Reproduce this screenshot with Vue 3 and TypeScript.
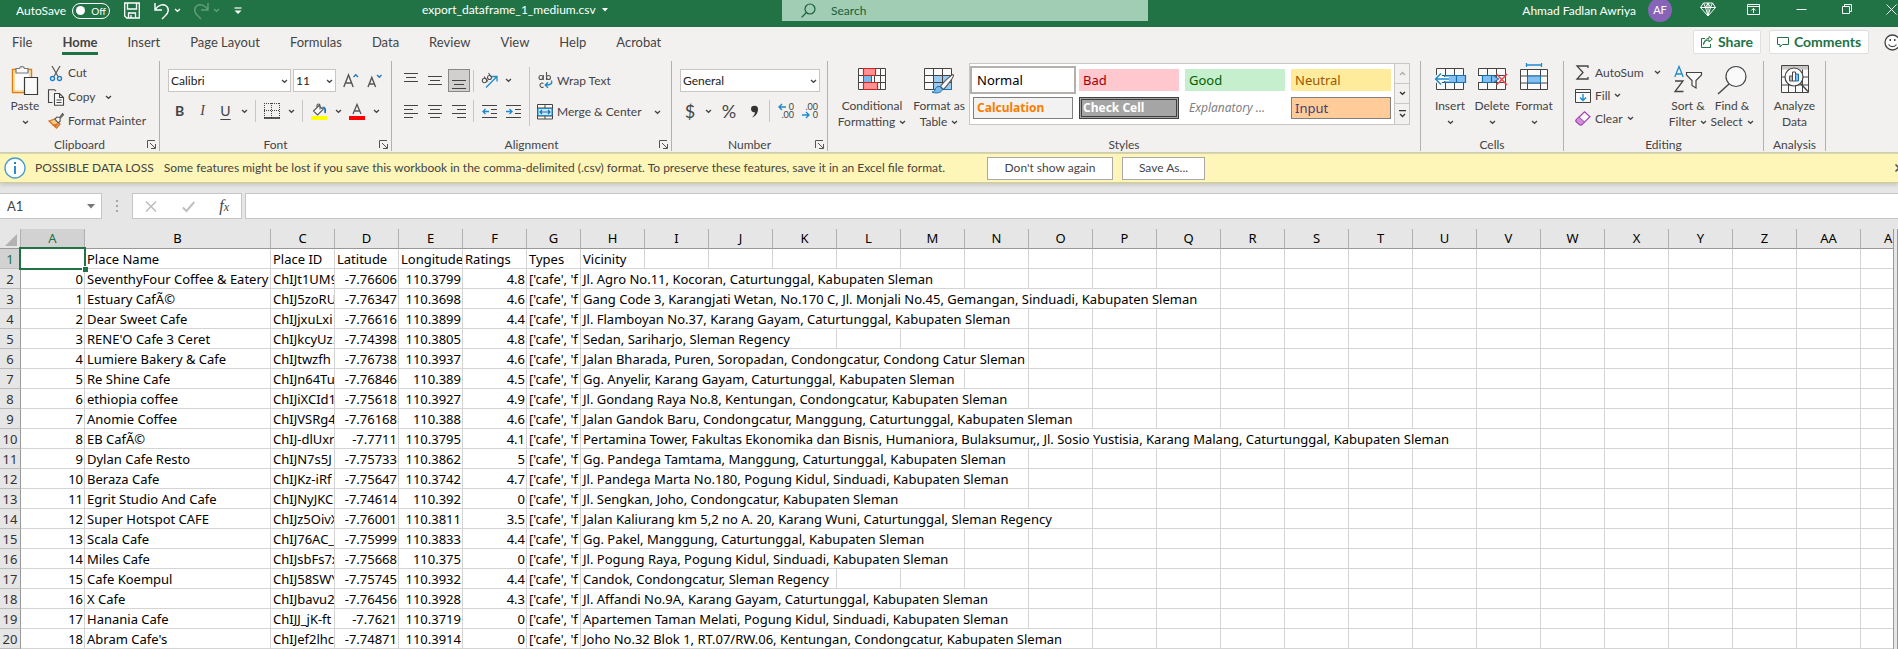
<script setup lang="ts">
import { h, ref } from 'vue'

const Chevron = () =>
  h('svg', { class: 'chev', width: 7, height: 5, viewBox: '0 0 7 5', 'aria-hidden': 'true' }, [
    h('path', { d: 'M1 1l2.5 2.3L6 1', fill: 'none', stroke: 'currentColor', 'stroke-width': 1.3 }),
  ])
const Launcher = () =>
  h('svg', { width: 9, height: 9, viewBox: '0 0 9 9', 'aria-hidden': 'true' }, [
    h('path', { d: 'M.5 8V.5H8M3 3l5 5M8.5 4v4.5H4', fill: 'none', stroke: '#555' }),
  ])

const tabs = ['File', 'Home', 'Insert', 'Page Layout', 'Formulas', 'Data', 'Review', 'View', 'Help', 'Acrobat']
const fontName = ref('Calibri')
const fontSize = ref('11')
const numberFormat = ref('General')
const nameBox = ref('A1')
const formula = ref('')

const cellStyles = [
  { name: 'Normal', cls: 'normal' },
  { name: 'Bad', cls: 'bad' },
  { name: 'Good', cls: 'good' },
  { name: 'Neutral', cls: 'neutral' },
  { name: 'Calculation', cls: 'calculation' },
  { name: 'Check Cell', cls: 'check' },
  { name: 'Explanatory ...', cls: 'explanatory' },
  { name: 'Input', cls: 'entry' },
]

const letters = [...'ABCDEFGHIJKLMNOPQRSTUVWXYZ', 'AA', 'AB']
const FIRST_FREE = 8

interface Row {
  name: string
  id: string
  lat: string
  lng: string
  rating: string
  vicinity: string
  span: number
}
const r = (name: string, id: string, lat: string, lng: string, rating: string, vicinity: string, span: number): Row =>
  ({ name, id, lat, lng, rating, vicinity, span })

const rows: Row[] = [
  r('SeventhyFour Coffee & Eatery', 'ChIJt1UM9', '-7.76606', '110.3799', '4.8', 'Jl. Agro No.11, Kocoran, Caturtunggal, Kabupaten Sleman', 6),
  r('Estuary CafÃ©', 'ChIJ5zoRU', '-7.76347', '110.3698', '4.6', 'Gang Code 3, Karangjati Wetan, No.170 C, Jl. Monjali No.45, Gemangan, Sinduadi, Kabupaten Sleman', 10),
  r('Dear Sweet Cafe', 'ChIJjxuLxi', '-7.76616', '110.3899', '4.4', 'Jl. Flamboyan No.37, Karang Gayam, Caturtunggal, Kabupaten Sleman', 7),
  r("RENE'O Cafe 3 Ceret", 'ChIJkcyUz.', '-7.74398', '110.3805', '4.8', 'Sedan, Sariharjo, Sleman Regency', 4),
  r('Lumiere Bakery & Cafe', 'ChIJtwzfh', '-7.76738', '110.3937', '4.6', 'Jalan Bharada, Puren, Soropadan, Condongcatur, Condong Catur Sleman', 7),
  r('Re Shine Cafe', 'ChIJn64Tu', '-7.76846', '110.389', '4.5', 'Gg. Anyelir, Karang Gayam, Caturtunggal, Kabupaten Sleman', 6),
  r('ethiopia coffee', 'ChIJiXCId1', '-7.75618', '110.3927', '4.9', 'Jl. Gondang Raya No.8, Kentungan, Condongcatur, Kabupaten Sleman', 7),
  r('Anomie Coffee', 'ChIJVSRg4', '-7.76168', '110.388', '4.6', 'Jalan Gandok Baru, Condongcatur, Manggung, Caturtunggal, Kabupaten Sleman', 8),
  r('EB CafÃ©', 'ChIJ-dlUxr', '-7.7711', '110.3795', '4.1', 'Pertamina Tower, Fakultas Ekonomika dan Bisnis, Humaniora, Bulaksumur,, Jl. Sosio Yustisia, Karang Malang, Caturtunggal, Kabupaten Sleman', 14),
  r('Dylan Cafe Resto', 'ChIJN7s5J', '-7.75733', '110.3862', '5', 'Gg. Pandega Tamtama, Manggung, Caturtunggal, Kabupaten Sleman', 7),
  r('Beraza Cafe', 'ChIJKz-iRf', '-7.75647', '110.3742', '4.7', 'Jl. Pandega Marta No.180, Pogung Kidul, Sinduadi, Kabupaten Sleman', 7),
  r('Egrit Studio And Cafe', 'ChIJNyJKC', '-7.74614', '110.392', '0', 'Jl. Sengkan, Joho, Condongcatur, Kabupaten Sleman', 6),
  r('Super Hotspot CAFE', 'ChIJz5OivX', '-7.76001', '110.3811', '3.5', 'Jalan Kaliurang km 5,2 no A. 20, Karang Wuni, Caturtunggal, Sleman Regency', 8),
  r('Scala Cafe', 'ChIJ76AC_', '-7.75999', '110.3833', '4.4', 'Gg. Pakel, Manggung, Caturtunggal, Kabupaten Sleman', 6),
  r('Miles Cafe', 'ChIJsbFs7x', '-7.75668', '110.375', '0', 'Jl. Pogung Raya, Pogung Kidul, Sinduadi, Kabupaten Sleman', 6),
  r('Cafe Koempul', 'ChIJ58SWY', '-7.75745', '110.3932', '4.4', 'Candok, Condongcatur, Sleman Regency', 4),
  r('X Cafe', 'ChIJbavu2', '-7.76456', '110.3928', '4.3', 'Jl. Affandi No.9A, Karang Gayam, Caturtunggal, Kabupaten Sleman', 7),
  r('Hanania Cafe', 'ChIJJ_jK-ft', '-7.7621', '110.3719', '0', 'Apartemen Taman Melati, Pogung Kidul, Sinduadi, Kabupaten Sleman', 7),
  r("Abram Cafe's", 'ChIJef2lhc', '-7.74871', '110.3914', '0', 'Joho No.32 Blok 1, RT.07/RW.06, Kentungan, Condongcatur, Kabupaten Sleman', 8),
]
const spare = (span: number) => letters.length - FIRST_FREE + 1 - span
</script>

<template>
  <div class="app">
    <header class="titlebar">
      <div class="quick">
        <label class="autosave">AutoSave
          <input type="checkbox" role="switch" class="sr" />
          <span class="toggle"><i></i>Off</span>
        </label>
        <button aria-label="Save" class="save"><svg width="16" height="17" viewBox="0 0 16 17"><path d="M.7 1h14.6v15H2.7L.7 14zM3.5 1v6h9V1M4.5 16v-5h7v5M7 13v3" fill="none" stroke="#fff" stroke-width="1.3" /></svg></button>
        <button aria-label="Undo" class="undo"><svg width="16" height="18" viewBox="0 0 16 18"><path d="M1 1v7h7M1.3 7.5C4 3 9 1.5 12 3.8c4 3 2 7.500-.5 9.7L8 17" fill="none" stroke="#fff" stroke-width="1.4" /></svg></button>
        <button aria-label="Undo history" class="more"><Chevron /></button>
        <button aria-label="Redo" class="undo dim"><svg width="16" height="18" viewBox="0 0 16 18"><path d="M15 1v7H8M14.7 7.5C12 3 7 1.5 4 3.8c-4 3-2 7.5.5 9.7L8 17" fill="none" stroke="#fff" stroke-width="1.4" /></svg></button>
        <button aria-label="Redo history" class="more dim"><Chevron /></button>
        <button aria-label="Customize toolbar" class="custom"><svg width="8" height="7" viewBox="0 0 8 7"><path d="M.5 1h7" stroke="#fff" stroke-width="1.2" /><path d="M.5 3.5h7L4 7z" fill="#fff" /></svg></button>
      </div>
      <div class="filename">export_dataframe_1_medium.csv
        <svg width="6" height="4" viewBox="0 0 6 4"><path d="M0 0h6L3 3.5z" fill="#fff" /></svg>
      </div>
      <label class="search">
        <svg width="15" height="15" viewBox="0 0 15 15"><circle cx="9" cy="6" r="5" fill="none" stroke="#17613a" stroke-width="1.2" /><path d="M5.5 9.5L.6 14.4" stroke="#17613a" stroke-width="1.3" /></svg>
        <input type="text" placeholder="Search" aria-label="Search" />
      </label>
      <div class="window">
        <span>Ahmad Fadlan Awriya</span>
        <button class="avatar" aria-label="Account">AF</button>
        <button class="diamond" aria-label="Premium"><svg width="16" height="15" viewBox="0 0 16 15"><path d="M3.5 1h9l3 4.5L8 14 .5 5.5zM.5 5.5h15M3.5 1l2 4.5L8 14l2.5-8.5 2-4.5M5.5 5.5L8 1l2.5 4.5M8 1v13" fill="none" stroke="#fff" /></svg></button>
        <button class="wbtn rib" aria-label="Ribbon display options"><svg width="13" height="11" viewBox="0 0 13 11"><path d="M.5.5h12v10H.5zM.5 2.500h12M6.5 9V4.5M4.3 6.5l2.2-2.2 2.2 2.2" fill="none" stroke="#fff" /></svg></button>
        <button class="wbtn" aria-label="Minimize"><svg width="11" height="11" viewBox="0 0 11 11"><path d="M.5 5.5h10" stroke="#fff" /></svg></button>
        <button class="wbtn" aria-label="Restore"><svg width="10" height="10" viewBox="0 0 10 10"><path d="M.5 2.5h7v7h-7zM2.5 2.5v-2h7v7h-2" fill="none" stroke="#fff" /></svg></button>
        <button class="wbtn close" aria-label="Close"><svg width="11" height="11" viewBox="0 0 11 11"><path d="M.5.5l10 10M10.5.5l-10 10" stroke="#fff" /></svg></button>
      </div>
    </header>

    <nav class="tabs">
      <button v-for="t in tabs" :key="t" :class="{ on: t === 'Home' }">{{ t }}</button>
      <span class="grow"></span>
      <button class="pill share"><svg width="12" height="12" viewBox="0 0 12 12"><path d="M4 2.5H.5v9h9V8M2.5 8.5C3 5.5 5 4 8 4V6l3.3-3L8 .5v1.8C5 2.5 3 5 2.5 8.5z" fill="none" stroke="#217346" /></svg>Share</button>
      <button class="pill comments"><svg width="12" height="11" viewBox="0 0 12 11"><path d="M.5.5h11v7h-6L3 10V7.5H.5z" fill="none" stroke="#217346" /></svg>Comments</button>
      <button class="smile" aria-label="Feedback"><svg width="17" height="17" viewBox="0 0 17 17"><circle cx="8.5" cy="8.5" r="7.5" fill="#fff" stroke="#444" stroke-width="1.3" /><path d="M4.5 10.5c2 2.8 6 2.8 8 0" fill="none" stroke="#444" stroke-width="1.2" /><path d="M5.5 5h1.5v2H5.5zM10 5h1.5v2H10z" fill="#444" /></svg></button>
    </nav>

    <section class="ribbon">
      <div class="group clipboard">
        <div class="body">
          <button class="big paste">
            <svg width="28" height="30" viewBox="0 0 28 30"><path d="M1.5 4.5h19v23h-19z" fill="#fafafa" stroke="#e07a10" stroke-width="1.4" /><path d="M3 6h16v20H3z" fill="none" stroke="#f7d588" stroke-width="1.5" /><path d="M5 8V3.500h3.5a2.6 2.6 0 0 1 5 0H17V8z" fill="#fafafa" stroke="#777" stroke-width="1.2" /><path d="M13.5 12.5h13v17h-13z" fill="#fafafa" stroke="#3a3a3a" stroke-width="1.2" /></svg>
            <span>Paste</span><Chevron />
          </button>
          <div class="stack">
            <button class="row"><svg width="16" height="17" viewBox="0 0 16 17"><path d="M4 1l6 10.5M12 1L6 11.5" stroke="#555" stroke-width="1.2" /><circle cx="4.5" cy="13.5" r="2" fill="none" stroke="#1e7fc4" stroke-width="1.4" /><circle cx="11.5" cy="13.5" r="2" fill="none" stroke="#1e7fc4" stroke-width="1.4" /></svg>Cut</button>
            <button class="row"><svg width="16" height="17" viewBox="0 0 16 17"><path d="M4.5 13.5h-4V.7h6l1.5 1.5" fill="none" stroke="#444" stroke-width="1.1" /><path d="M6.5 4.5h5l4 4v7.8h-9zM11.5 4.5v4h4M8.5 11h5M8.5 13.5h5" fill="#fafafa" stroke="#444" stroke-width="1.1" /></svg>Copy<Chevron class="far" /></button>
            <button class="row"><svg width="16" height="16" viewBox="0 0 16 16"><path d="M1 8l6-2 5 5-3.5 4z" fill="#f5c98c" stroke="#d9711c" stroke-width="1.3" /><path d="M4 12l4 2 3-4" fill="#d9711c" /><path d="M7 6l2-2 2.5.5L14.5.7l1 1-3.5 4 .2 2.3-2 2z" fill="#fafafa" stroke="#555" stroke-width="1.1" /></svg>Format Painter</button>
          </div>
        </div>
        <footer><span>Clipboard</span><button aria-label="Clipboard settings"><Launcher /></button></footer>
      </div>

      <div class="group font">
        <div class="body lines">
          <div class="line">
            <div class="combo fname"><select v-model="fontName" aria-label="Font"><option>Calibri</option></select><Chevron /></div>
            <div class="combo fsize"><select v-model="fontSize" aria-label="Font size"><option>11</option></select><Chevron /></div>
            <button class="ic grower" aria-label="Increase font size"><svg width="16" height="15" viewBox="0 0 16 15"><path d="M.8 14L5.5 2 10.2 14M2.4 10h6.2" fill="none" stroke="#555" stroke-width="1.4" /><path d="M10.500 4L12.8 1.7 15 4" fill="none" stroke="#1e7fc4" stroke-width="1.4" /></svg></button>
            <button class="ic" aria-label="Decrease font size"><svg width="16" height="15" viewBox="0 0 16 15"><path d="M1 14L4.8 4.5 8.6 14M2.3 11h5" fill="none" stroke="#555" stroke-width="1.4" /><path d="M10 2l2.3 2.3L14.5 2" fill="none" stroke="#1e7fc4" stroke-width="1.4" /></svg></button>
          </div>
          <div class="line second">
            <button class="ic b">B</button>
            <button class="ic i">I</button>
            <button class="ic u">U</button>
            <button class="drop" aria-label="Underline options"><Chevron /></button>
            <i class="sep"></i>
            <button class="ic" aria-label="Borders"><svg width="16" height="16" viewBox="0 0 16 16"><path d="M0 .5h16M0 7.5h16M.5 0v15M7.5 0v15M15.5 0v15" stroke="#444" stroke-dasharray="1 1" /><path d="M0 15h16" stroke="#222" stroke-width="1.5" /></svg></button>
            <button class="drop" aria-label="Border options"><Chevron /></button>
            <i class="sep"></i>
            <button class="ic" aria-label="Fill color"><svg width="16" height="17" viewBox="0 0 16 17"><path d="M2.5 8L8 2.5l4 4-5.5 5.5zM6 4.5V2.5a1.5 1.5 0 0 1 3 0v4" fill="#fafafa" stroke="#555" stroke-width="1.1" /><path d="M11.5 4.5c3 0 3 2.5 2.5 5.5" fill="none" stroke="#1e6fb4" stroke-width="1.8" /><path d="M0 13h16v4H0z" fill="#ff0" /></svg></button>
            <button class="drop" aria-label="Fill color options"><Chevron /></button>
            <button class="ic" aria-label="Font color"><svg width="16" height="17" viewBox="0 0 16 17"><path d="M4 11L8 1.5 12 11M5.4 8h5.2" fill="none" stroke="#555" stroke-width="1.3" /><path d="M0 13h16v4H0z" fill="#f00" /></svg></button>
            <button class="drop" aria-label="Font color options"><Chevron /></button>
          </div>
        </div>
        <footer><span>Font</span><button aria-label="Font settings"><Launcher /></button></footer>
      </div>

      <div class="group align">
        <div class="body">
          <div class="lines">
            <div class="line">
              <button class="ic" aria-label="Top align"><svg width="14" height="18" viewBox="0 0 14 18"><path d="M0 1.5h14M2 5.5h10M0 9.5h14" stroke="#444" stroke-width="1.2" /></svg></button>
              <button class="ic" aria-label="Middle align"><svg width="14" height="18" viewBox="0 0 14 18"><path d="M0 4.5h14M2 8.5h10M0 12.5h14" stroke="#444" stroke-width="1.2" /></svg></button>
              <button class="ic pressed" aria-label="Bottom align"><svg width="14" height="18" viewBox="0 0 14 18"><path d="M0 8.5h14M2 12.5h10M0 16.5h14" stroke="#444" stroke-width="1.2" /></svg></button>
              <i class="sep"></i>
              <button class="ic" aria-label="Orientation"><svg width="17" height="17" viewBox="0 0 17 17"><g fill="none" stroke="#555" stroke-width="1.1"><circle cx="3.5" cy="8.5" r="2.2" /><path d="M3 4.5l4 5M7.5 1l3.5 5" /><circle cx="8.5" cy="5.5" r="2" /></g><path d="M5 15.5L15.5 5M11 4.5h5V9.5" fill="none" stroke="#1e8bcd" stroke-width="1.3" /></svg></button>
              <button class="drop" aria-label="Orientation options"><Chevron /></button>
            </div>
            <div class="line second">
              <button class="ic" aria-label="Align left"><svg width="14" height="14" viewBox="0 0 14 14"><path d="M0 1.5h14M0 5.5h9M0 9.5h14M0 13.5h9" stroke="#444" stroke-width="1.2" /></svg></button>
              <button class="ic" aria-label="Center"><svg width="14" height="14" viewBox="0 0 14 14"><path d="M0 1.5h14M2 5.5h10M0 9.5h14M2 13.5h10" stroke="#444" stroke-width="1.2" /></svg></button>
              <button class="ic" aria-label="Align right"><svg width="14" height="14" viewBox="0 0 14 14"><path d="M0 1.5h14M5 5.5h9M0 9.5h14M5 13.5h9" stroke="#444" stroke-width="1.2" /></svg></button>
              <i class="sep"></i>
              <button class="ic" aria-label="Decrease indent"><svg width="15" height="14" viewBox="0 0 15 14"><path d="M0 1.5h15M9 5.5h6M9 9.5h6M0 13.5h15" stroke="#444" stroke-width="1.2" /><path d="M7 7.5H1M3.5 5L1 7.5 3.5 10" fill="none" stroke="#1e8bcd" stroke-width="1.4" /></svg></button>
              <button class="ic" aria-label="Increase indent"><svg width="15" height="14" viewBox="0 0 15 14"><path d="M0 1.5h15M9 5.5h6M9 9.5h6M0 13.5h15" stroke="#444" stroke-width="1.2" /><path d="M0 7.5h6M3.5 5L6 7.5 3.5 10" fill="none" stroke="#1e8bcd" stroke-width="1.4" /></svg></button>
            </div>
          </div>
          <i class="sep tall"></i>
          <div class="lines wrapcol">
            <button class="row"><svg width="16" height="17" viewBox="0 0 16 17"><g fill="none" stroke="#555" stroke-width="1.1"><circle cx="4" cy="5.5" r="2" /><path d="M6.3 3v5M9.5 0v8" /><circle cx="11.5" cy="5.5" r="2" /><path d="M6.5 11.5a2.2 2.2 0 1 0 0 3.5" /></g><path d="M14.5 8.5c1 3-.5 4.5-6 4.5M11 10.3L8.3 13 11 15.7" fill="none" stroke="#1e8bcd" stroke-width="1.4" /></svg>Wrap Text</button>
            <button class="row"><svg width="16" height="16" viewBox="0 0 16 16"><path d="M.5.5h15v14.5H.5zM.5 4h15M.5 12h15M8 .5V4M8 12v3" fill="#fafafa" stroke="#444" /><path d="M1 4.5h14v7H1z" fill="#cfe6f7" stroke="#1e8bcd" /><path d="M3 8h10M5 6L3 8l2 2M11 6l2 2-2 2" fill="none" stroke="#1670b0" stroke-width="1.2" /></svg>Merge &amp; Center<Chevron class="far" /></button>
          </div>
        </div>
        <footer><span>Alignment</span><button aria-label="Alignment settings"><Launcher /></button></footer>
      </div>

      <div class="group number">
        <div class="body lines">
          <div class="line"><div class="combo nfmt"><select v-model="numberFormat" aria-label="Number format"><option>General</option></select><Chevron /></div></div>
          <div class="line second">
            <button class="ic sym">$</button>
            <button class="drop" aria-label="Accounting options"><Chevron /></button>
            <button class="ic sym pct">%</button>
            <button class="ic" aria-label="Comma style"><svg width="9" height="13" viewBox="0 0 9 13"><path d="M1 3.8a3.5 3.3 0 1 1 7 .3C8 8.5 5.5 11.5 2 12.5c2-2 3-3.5 3-5.2C3 7.700 1 6.5 1 3.8z" fill="#333" /></svg></button>
            <i class="sep"></i>
            <button class="ic dec" aria-label="Increase decimal"><svg class="arrow" width="8" height="8" viewBox="0 0 8 8"><path d="M8 4H1M4 1L1 4l3 3" fill="none" stroke="#1e8bcd" stroke-width="1.4" /></svg><span>0</span><span class="wide">.00</span></button>
            <button class="ic dec" aria-label="Decrease decimal"><span class="wide">.00</span><svg class="arrow" width="8" height="8" viewBox="0 0 8 8"><path d="M0 4h7M4 1l3 3-3 3" fill="none" stroke="#1e8bcd" stroke-width="1.4" /></svg><span>0</span></button>
          </div>
        </div>
        <footer><span>Number</span><button aria-label="Number settings"><Launcher /></button></footer>
      </div>

      <div class="group styles">
        <div class="body">
          <button class="big cond"><svg width="28" height="28" viewBox="0 0 28 28"><path d="M.5 3.5h27v21H.5zM.5 10.5h27M.5 17.5h27M5.5 3.5v21M16.5 3.5v21M22.5 3.5v21" fill="#fafafa" stroke="#444" /><path d="M5.5 10.5h8v7h-8z" fill="#7ab8ea" stroke="#1670b0" /><path d="M5.5 3.5h12v7h-12zM5.5 17.5h14v7h-14z" fill="#ff9292" stroke="#d6201c" stroke-width="1.2" /></svg><span>Conditional</span><span>Formatting <Chevron /></span></button>
          <button class="big fmt"><svg width="30" height="28" viewBox="0 0 30 28"><path d="M.5 3.5h27v21H.5z" fill="#fafafa" stroke="#444" /><path d="M9.5 10.5h18v14h-18z" fill="#9bcaf0" stroke="#1670b0" /><path d="M.5 10.5h27M.5 17.5h27M9.5 3.5v21M18.5 3.5v21" stroke="#444" /><path d="M29 9.5c-3 1-11 9.5-12.5 12l3 3C22 22 29 13.5 29.5 10.5z" fill="#fafafa" stroke="#555" stroke-width="1.1" /><path d="M16 21.5c-3-.5-4.5 1-5 3.5-.5 1.5-1.5 2-3 2 3 1.5 9 1.5 10.5-2.5z" fill="#7ab8ea" stroke="#1670b0" /></svg><span>Format as</span><span>Table <Chevron /></span></button>
          <div class="gallery">
            <div class="swatches"><button v-for="s in cellStyles" :key="s.name" :class="s.cls">{{ s.name }}</button></div>
            <div class="scroll">
              <button aria-label="Scroll up" class="off"><svg width="7" height="5" viewBox="0 0 7 5"><path d="M1 4l2.5-2.5L6 4" fill="none" stroke="#aaa" stroke-width="1.3" /></svg></button>
              <button aria-label="Scroll down"><Chevron /></button>
              <button aria-label="More styles"><svg width="7" height="8" viewBox="0 0 7 8"><path d="M0 .7h7M1 4l2.5 2.5L6 4" fill="none" stroke="#333" stroke-width="1.3" /></svg></button>
            </div>
          </div>
        </div>
        <footer><span>Styles</span></footer>
      </div>

      <div class="group cells">
        <div class="body">
          <button class="big"><svg width="32" height="28" viewBox="0 0 32 28"><path d="M2.5 3.5h27v21h-27zM2.5 10.5h27M2.5 17.5h27M11.5 3.5v21M20.5 3.5v21" fill="#fafafa" stroke="#444" /><path d="M10.5 10.5h21v7h-21zM22.5 10.5v7" fill="#83bff0" stroke="#1670b0" stroke-width="1.2" /><path d="M15 14H2M7 8.5L1.5 14 7 19.5" fill="none" stroke="#fafafa" stroke-width="4" /><path d="M15 14H2M7 8.5L1.5 14 7 19.5" fill="none" stroke="#1e8bcd" stroke-width="1.5" /></svg><span>Insert</span><Chevron /></button>
          <button class="big"><svg width="32" height="28" viewBox="0 0 32 28"><path d="M2.5 3.5h27v21h-27zM2.5 10.5h27M2.5 17.5h27M11.5 3.5v21M20.5 3.5v21" fill="#fafafa" stroke="#444" /><path d="M0 11h6v6H0z" fill="#f3f1f0" /><path d="M6.5 10.5h11l5 3.5-5 3.5h-11zM15.5 10.5v7" fill="#83bff0" stroke="#1670b0" stroke-width="1.2" /><path d="M20.5 9l10.5 11M31 9L20.5 20" stroke="#ef4444" stroke-width="1.5" /></svg><span>Delete</span><Chevron /></button>
          <button class="big"><svg width="32" height="28" viewBox="0 0 32 28"><path d="M2.5 4.5h27v20h-27zM2.5 11h27M2.5 18h27M9.5 4.5v20M22.5 4.5v20" fill="#fafafa" stroke="#444" /><path d="M9.5 11h13v7h-13z" fill="#83bff0" stroke="#1670b0" /><path d="M8.5 0h15M8.5-2v4M23.5-2v4" stroke="#1e8bcd" stroke-width="1.3" /></svg><span>Format</span><Chevron /></button>
        </div>
        <footer><span>Cells</span></footer>
      </div>

      <div class="group editing">
        <div class="body">
          <div class="stack">
            <button class="row"><svg width="16" height="15" viewBox="0 0 16 15"><path d="M13 3V1H2l6 6.5L2 14h11v-2" fill="none" stroke="#444" stroke-width="1.3" /></svg>AutoSum<Chevron class="far" /></button>
            <button class="row"><svg width="16" height="14" viewBox="0 0 16 14"><path d="M.5.5h15v13H.5zM.5 3.5h15" fill="#fafafa" stroke="#444" /><path d="M8 5v6.5M5 8.5l3 3 3-3" fill="none" stroke="#1e8bcd" stroke-width="1.4" /></svg>Fill<Chevron /></button>
            <button class="row"><svg width="16" height="15" viewBox="0 0 16 15"><path d="M1 9L9.5.8l5.5 5L6.5 14H5L1 10.5z" fill="#fafafa" stroke="#a33fb0" stroke-width="1.2" /><path d="M1 9l3-3 5.5 5-3 3H5L1 10.5z" fill="#cf8fd8" stroke="#a33fb0" /></svg>Clear<Chevron /></button>
          </div>
          <button class="big"><svg width="28" height="28" viewBox="0 0 28 28"><path d="M.8 12L5 1.5 9.2 12M2.2 9h5.6" fill="none" stroke="#1e8bcd" stroke-width="1.3" /><path d="M1 16h8L1 26.5h8.5" fill="none" stroke="#444" stroke-width="1.3" /><path d="M12.5 7.5h15v2.5l-5.5 5.5V23l-4-2.5v-5L12.5 10z" fill="#fafafa" stroke="#444" stroke-width="1.2" /></svg><span>Sort &amp;</span><span>Filter <Chevron /></span></button>
          <button class="big"><svg width="30" height="30" viewBox="0 0 30 30"><circle cx="19" cy="11.5" r="10" fill="#fafafa" stroke="#444" stroke-width="1.2" /><path d="M12 19L1 29" stroke="#444" stroke-width="1.4" /></svg><span>Find &amp;</span><span>Select <Chevron /></span></button>
        </div>
        <footer><span>Editing</span></footer>
      </div>

      <div class="group analysis">
        <div class="body">
          <button class="big"><svg width="28" height="28" viewBox="0 0 28 28"><path d="M.5.5h27v27H.5zM.5 12h27M.5 20h27M7.5 4v23M14.5 20v7M21.5 4v23" fill="#fafafa" stroke="#444" /><path d="M1 1h26v3.5H1z" fill="#c8c6c4" /><circle cx="13" cy="12" r="9" fill="#fafafa" stroke="#444" stroke-width="1.2" /><path d="M8.5 11h3v5h-3z" fill="#bbb" stroke="#555" /><path d="M11.5 7h3v9h-3z" fill="#fafafa" stroke="#444" /><path d="M14.5 9h3v7h-3z" fill="#83bff0" stroke="#1670b0" /><path d="M19.5 18.5L27 26.5" stroke="#444" stroke-width="1.4" /></svg><span>Analyze</span><span>Data</span></button>
        </div>
        <footer><span>Analysis</span></footer>
      </div>
    </section>

    <section class="notice">
      <svg width="22" height="22" viewBox="0 0 22 22"><circle cx="11" cy="11" r="10" fill="#fff" stroke="#4a9fd0" stroke-width="1.4" /><path d="M11 9v8" stroke="#1e7fc4" stroke-width="1.8" /><path d="M10 5h2v2h-2z" fill="#1e7fc4" /></svg>
      <strong>POSSIBLE DATA LOSS</strong>
      <p>Some features might be lost if you save this workbook in the comma-delimited (.csv) format. To preserve these features, save it in an Excel file format.</p>
      <button class="again">Don't show again</button>
      <button class="saveas">Save As...</button>
      <button class="x" aria-label="Close message"><svg width="8" height="8" viewBox="0 0 8 8"><path d="M.5.5l7 7M7.5.5l-7 7" stroke="#555" stroke-width="1.6" /></svg></button>
    </section>

    <section class="fbar">
      <label class="namebox"><input v-model="nameBox" type="text" aria-label="Name box" /><svg width="8" height="5" viewBox="0 0 8 5"><path d="M0 0h8L4 4.5z" fill="#777" /></svg></label>
      <span class="dots"><i></i><i></i><i></i></span>
      <div class="fbtns">
        <button aria-label="Cancel"><svg width="12" height="11" viewBox="0 0 12 11"><path d="M1 .5l10 10M11 .5l-10 10" stroke="#c0c0c0" stroke-width="1.7" /></svg></button>
        <button aria-label="Enter"><svg width="13" height="11" viewBox="0 0 13 11"><path d="M.8 6.5l3.7 3.5L12.3 1" fill="none" stroke="#c0c0c0" stroke-width="2" /></svg></button>
        <button class="fx" aria-label="Insert function">f<sub>x</sub></button>
      </div>
      <input v-model="formula" class="formula" type="text" aria-label="Formula bar" />
    </section>

    <main class="sheetwrap">
      <div class="sheet">
        <table>
          <colgroup><col class="c-head" /><col v-for="l in letters" :key="l" :class="'c-' + l" /></colgroup>
          <thead>
            <tr><th class="corner"><svg width="12" height="12" viewBox="0 0 12 12"><path d="M12 0v12H0z" fill="#b2b2b2" /></svg></th><th v-for="l in letters" :key="l" scope="col" :class="{ sel: l === 'A' }">{{ l }}</th></tr>
          </thead>
          <tbody>
            <tr>
              <th scope="row" class="sel">1</th>
              <td class="active"><span class="cursor"></span></td>
              <td>Place Name</td><td>Place ID</td><td>Latitude</td><td>Longitude</td><td>Ratings</td><td>Types</td><td>Vicinity</td>
              <td v-for="n in spare(1)" :key="n"></td>
            </tr>
            <tr v-for="(d, k) in rows" :key="k">
              <th scope="row">{{ k + 2 }}</th>
              <td class="num">{{ k }}</td>
              <td>{{ d.name }}</td>
              <td>{{ d.id }}</td>
              <td class="num">{{ d.lat }}</td>
              <td class="num">{{ d.lng }}</td>
              <td class="num">{{ d.rating }}</td>
              <td>['cafe', 'f</td>
              <td :colspan="d.span">{{ d.vicinity }}</td>
              <td v-for="n in spare(d.span)" :key="n"></td>
            </tr>
          </tbody>
        </table>
      </div>
      <div class="rail"></div>
    </main>
  </div>
</template>

<style>
body { margin: 0; overflow: hidden; }
</style>

<style scoped>
.app { font: 12px/16px Lato, "Open Sans", sans-serif; color: #444; background: #e6e6e6; overflow: hidden; }
.app * { box-sizing: border-box; }
button { font: inherit; color: inherit; background: none; border: 0; padding: 0; margin: 0; display: flex; align-items: center; justify-content: center; white-space: nowrap; }
svg { flex: none; overflow: visible; }
input, select { font: inherit; color: inherit; outline: 0; }
.grow { flex: 1; }
.sr { position: absolute; opacity: 0; width: 1px; height: 1px; margin: 0; }

.titlebar { height: 27px; background: #217346; color: #fff; display: grid; grid-template-columns: 422fr 360fr 366fr 750fr; }
.quick { display: flex; align-items: center; padding: 0 0 6px 16px; }
.autosave { display: flex; align-items: center; gap: 6px; }
.toggle { width: 38px; height: 16px; border: 1px solid #fff; border-radius: 8px; display: flex; align-items: center; gap: 6px; padding-left: 3px; font-size: 10px; }
.toggle i { width: 9px; height: 9px; border-radius: 50%; background: #fff; }
.save { margin-left: 14px; }
.undo { margin-left: 14px; }
.more { margin-left: 4px; }
.more + .undo { margin-left: 12px; }
.dim { opacity: .3; }
.custom { margin-left: 14px; }
.filename { display: flex; align-items: center; gap: 6px; padding-bottom: 8px; white-space: nowrap; }
.search { height: 21px; background: #a0cdb4; color: #17613a; display: flex; align-items: center; gap: 15px; padding-left: 19px; }
.search input { border: 0; background: none; padding: 0; flex: 1; min-width: 0; }
.search input::placeholder { color: #17613a; opacity: 1; }
.window { display: flex; align-items: flex-start; justify-content: flex-end; height: 27px; overflow: hidden; white-space: nowrap; }
.window span { line-height: 22px; margin-right: 12px; }
.avatar { width: 24px; height: 24px; margin-top: -2px; border-radius: 50%; background: #8764b8; font-size: 11px; }
.diamond { height: 19px; margin: 0 14px 0 28px; }
.wbtn { width: 46px; height: 18px; }
.wbtn.rib { margin-right: 2px; }
.wbtn.close { width: 28px; padding-left: 16px; justify-content: flex-start; }

.tabs { height: 30px; background: #f3f1f0; display: flex; align-items: center; gap: 30px; padding-left: 12px; font-size: 13px; overflow: hidden; }
.tabs > button { height: 26px; padding-top: 2px; flex: none; border-bottom: 3px solid transparent; }
.tabs > .on { border-color: #217346; font-weight: 700; }
.tabs > .pill { height: 24px; background: #fff; border: 1px solid #e1dfdd; border-radius: 2px; color: #217346; font-weight: 700; font-size: 14px; padding: 0; gap: 5px; margin: 0 0 0 -22px; }
.share { width: 68px; }
.comments { width: 100px; }
.tabs > .smile { border: 0; padding: 0; margin-left: -15px; width: 14px; justify-content: flex-start; }

.ribbon { height: 96px; background: #f3f1f0; display: flex; padding-top: 4px; border-bottom: 1px solid #d0cecc; overflow: hidden; }
.group { display: flex; flex-direction: column; justify-content: space-between; height: 90px; border-right: 1px solid #b3b0ad; flex: none; }
.body { display: flex; }
.group footer { display: flex; align-items: center; justify-content: center; position: relative; height: 12px; line-height: 12px; }
.group footer button { position: absolute; right: 3px; top: 1px; }
.clipboard { width: 160px; } .font { width: 232px; } .align { width: 280px; } .number { width: 156px; }
.styles { width: 593px; } .cells { width: 143px; } .editing { width: 200px; } .analysis { width: 62px; }

.big { flex-direction: column; justify-content: flex-start; width: 42px; height: 72px; padding-top: 4px; }
.big > svg:first-child { margin-bottom: 5px; }
.big > svg:first-child[height="30"] { margin-bottom: 3px; }
.big span { display: flex; align-items: center; gap: 4px; line-height: 16px; }
.big > .chev { margin-top: 6px; }
.row { height: 24px; gap: 4px; justify-content: flex-start; }
.row .chev { margin-left: 0; }
.row .far { margin-left: 6px; }
.stack { display: flex; flex-direction: column; align-items: flex-start; }
.clipboard .body { padding-left: 4px; }
.paste { margin-right: 2px; }
.editing .stack .row { height: 23px; }
.editing .body { padding-left: 11px; }
.editing .stack { width: 91px; }
.editing .big { width: 44px; }
.analysis .big { width: 61px; }
.cells .body { padding-left: 8px; }

.lines { flex-direction: column; display: flex; }
.line { display: flex; align-items: center; height: 39px; padding-top: 0; }
.second { height: 22px; }
.font .body, .number .body { padding-left: 8px; }
.combo { position: relative; height: 23px; display: flex; }
.combo select { appearance: none; width: 100%; border: 1px solid #c8c6c4; background: #fff; padding: 0 2px; color: #222; border-radius: 0; }
.combo .chev { position: absolute; right: 3px; top: 10px; pointer-events: none; }
.fname { width: 123px; margin-right: 2px; } .fsize { width: 43px; } .nfmt { width: 140px; }
.ic { width: 24px; height: 23px; flex: none; }
.grower { margin-left: 3px; }
.drop { width: 14px; height: 23px; flex: none; }
.sep { width: 1px; height: 22px; background: #c8c6c4; flex: none; margin: 0 3px; }
.b { font-weight: 700; font-size: 14px; }
.i { font: italic 14px "Liberation Serif", serif; }
.u { text-decoration: underline; font-size: 14px; text-underline-offset: 3px; }
.font .second .sep { margin: 0 4px; }
.font .second .ic:not(.b, .i, .u) { margin-right: 1px; }
.font .second .ic { width: 23px; }
.pressed { background: #d2d0ce; border: 1px solid #8a8886; width: 22px; margin: 0 1px; }
.align .body { padding-left: 7px; }
.align .sep:not(.tall) { margin: 0 3px 0 2px; }
.align > .body > .lines:first-child { width: 130px; }
.tall { height: 59px; margin: 6px 7px 0 0; }
.wrapcol .row { height: 39px; }
.wrapcol .row + .row { height: 24px; }
.wrapcol .far { margin-left: 8px; }
.sym { font-size: 18px; }
.number .second .sep { margin: 0 4px 0 3px; }
.number .ic.sym { width: 20px; margin-right: 1px; }
.number .ic.pct { width: 24px; margin-left: 2px; }
.dec { display: grid; grid-template-columns: 9px 7px; justify-content: center; align-content: center; font-size: 9px; line-height: 8px; text-align: right; }
.dec .wide { grid-column: 1 / 3; }
.dec span { text-align: right; }

.cond { width: 76px; margin-left: 6px; }
.fmt { width: 58px; }
.gallery { display: flex; height: 62px; margin: 2px 0 0 1px; border: 1px solid #c8c6c4; background: #fff; }
.swatches { display: grid; grid-template-columns: repeat(4, 100px); gap: 6px; padding: 5px 3px; }
.swatches button { height: 22px; padding: 0 4px; justify-content: flex-start; font: 13px/20px "Noto Sans", sans-serif; }
.normal { background: #fff; color: #000; outline: 2px solid #b3b0ad; outline-offset: 1px; }
.bad { background: #ffc7ce; color: #9c0006; }
.good { background: #c6efce; color: #006100; }
.neutral { background: #ffeb9c; color: #9c5700; }
.swatches .calculation { background: #f2f2f2; color: #fa7d00; border: 1px solid #7f7f7f; font-weight: 700; font-size: 12px; padding: 0 3px; }
.swatches .check { background: #a5a5a5; color: #fff; border: 3px double #3f3f3f; font-weight: 700; font-size: 12px; padding: 0 1px; }
.swatches .explanatory { color: #7f7f7f; font-style: italic; font-size: 12px; }
.swatches .entry { background: #ffcc99; color: #3f3f76; border: 1px solid #7f7f7f; padding: 0 3px; }
.scroll { display: grid; grid-template-rows: 20px 20px 20px; width: 15px; margin-left: 0; background: #f3f1f0; }
.scroll button { border-left: 1px solid #c8c6c4; border-bottom: 1px solid #c8c6c4; color: #333; }
.scroll button:last-child { border-bottom: 0; }

.notice { height: 30px; background: #fdf6b8; border-top: 1px solid #dcd890; border-bottom: 1px solid #d4d08a; display: flex; align-items: center; padding-left: 4px; box-shadow: 0 2px 4px #00000026; position: relative; overflow: visible; white-space: nowrap; }
.notice strong { font-weight: 400; margin: 0 10px 0 9px; }
.notice p { margin: 0; }
.notice button { height: 23px; background: #fff; border: 1px solid #aba9a7; }
.notice .again { width: 126px; margin-left: auto; margin-right: 9px; }
.notice .saveas { width: 83px; margin-right: 690px; }
.notice .x { background: none; border: 0; width: 3px; justify-content: flex-start; }

.fbar { display: flex; padding: 10px 0; height: 46px; }
.namebox { width: 102px; display: flex; align-items: center; background: #fff; border: 1px solid #c6c6c6; border-left: 0; padding: 0 6px 0 7px; font-size: 13px; }
.namebox input { flex: 1; min-width: 0; border: 0; padding: 0; background: none; }
.dots { width: 30px; display: flex; flex-direction: column; align-items: center; justify-content: center; gap: 3px; }
.dots i { width: 2px; height: 2px; background: #a6a6a6; }
.fbtns { width: 110px; background: #fff; border: 1px solid #c6c6c6; display: flex; align-items: center; justify-content: space-between; padding: 0 12px; margin-right: 3px; }
.fx { font: italic 16px/16px "Liberation Serif", serif; align-items: baseline; }
.fx sub { font-size: 12px; line-height: 12px; }
.formula { flex: 1; min-width: 0; border: 1px solid #c6c6c6; border-right: 0; background: #fff; padding: 0 6px; border-radius: 0; }

.sheetwrap { display: flex; }
.sheet { flex: 1; min-width: 0; overflow: hidden; border-right: 1px solid #999; background: #fff; }
.rail { width: 4px; border-right: 1px solid #999; background: #e6e6e6; }
table { table-layout: fixed; width: 1925px; border-collapse: separate; border-spacing: 0; font: 13px/17px "Noto Sans", sans-serif; color: #000; }
col { width: 64px; }
.c-head { width: 21px; } .c-B { width: 186px; } .c-G { width: 54px; }
th, td { height: 20px; padding: 2px 1px 0 2px; border-right: 1px solid #d4d4d4; border-bottom: 1px solid #d4d4d4; white-space: nowrap; overflow: hidden; vertical-align: top; text-align: left; font-weight: 400; }
th { background: #e6e6e6; text-align: center; padding: 1px 0 0; }
thead th { border-bottom-color: #999; border-right: 1px solid #b0b0b0; }
tbody th { border-right-color: #999; border-bottom-color: #bbb; color: #333; padding-top: 2px; overflow: visible; }
.corner { padding: 5px 3px 0 0; text-align: right; line-height: 0; }
.corner svg { display: inline-block; }
th.sel { background: #d2d2d2; color: #217346; }
.num { text-align: right; }
.active { position: relative; overflow: visible; }
.cursor { position: absolute; inset: -2px; border: 2px solid #217346; z-index: 1; }
.cursor::after { content: ""; position: absolute; right: -4px; bottom: -4px; width: 5px; height: 5px; background: #217346; border: solid #fff; border-width: 1px 0 0 1px; box-sizing: content-box; }
</style>
